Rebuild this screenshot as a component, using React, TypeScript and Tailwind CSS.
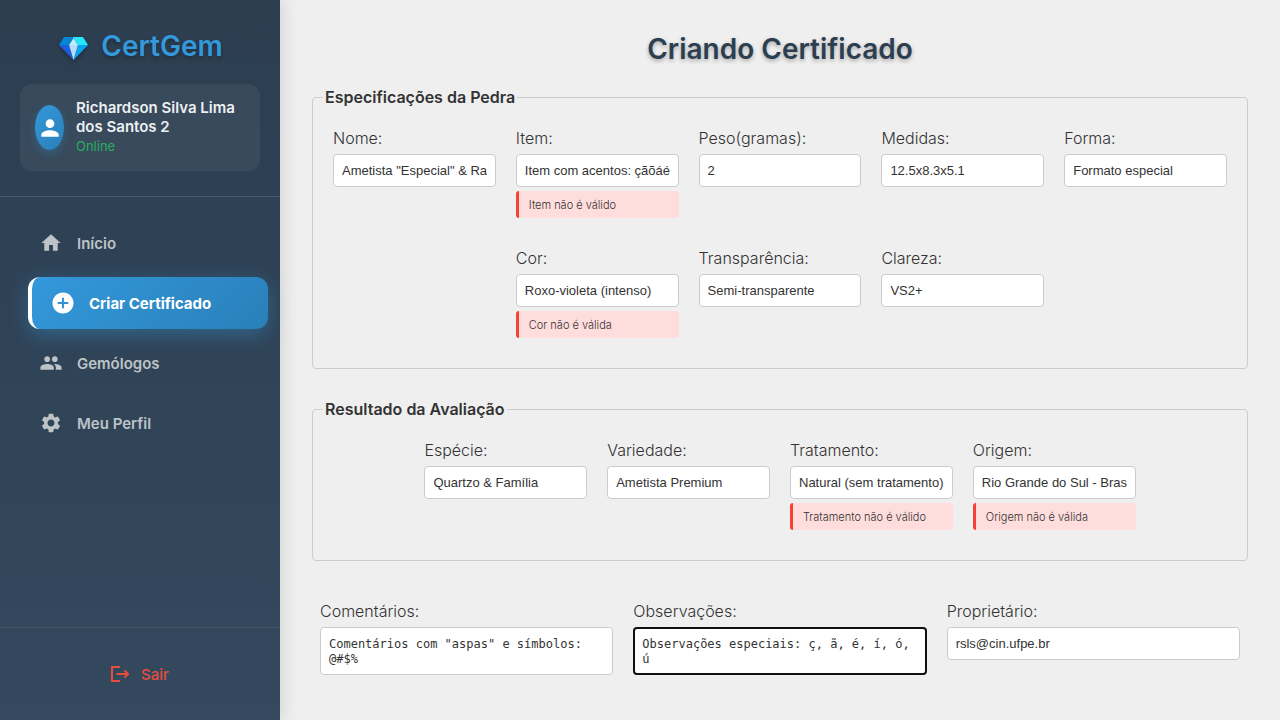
import { useEffect, useRef } from "react";
import { MdAddCircle, MdHome, MdPeople, MdPerson, MdSettings } from "react-icons/md";
import type { IconType } from "react-icons";

type FieldData = { id: string; label: string; value: string; error?: string };

const stoneFields: FieldData[] = [
  { id: "nome", label: "Nome:", value: 'Ametista "Especial" & Rara' },
  { id: "item", label: "Item:", value: "Item com acentos: çãõáéíóú", error: "Item não é válido" },
  { id: "peso", label: "Peso(gramas):", value: "2" },
  { id: "medidas", label: "Medidas:", value: "12.5x8.3x5.1" },
  { id: "forma", label: "Forma:", value: "Formato especial" },
  { id: "cor", label: "Cor:", value: "Roxo-violeta (intenso)", error: "Cor não é válida" },
  { id: "transparencia", label: "Transparência:", value: "Semi-transparente" },
  { id: "clareza", label: "Clareza:", value: "VS2+" },
];

const resultFields: FieldData[] = [
  { id: "especie", label: "Espécie:", value: "Quartzo & Família" },
  { id: "variedade", label: "Variedade:", value: "Ametista Premium" },
  { id: "tratamento", label: "Tratamento:", value: "Natural (sem tratamento)", error: "Tratamento não é válido" },
  { id: "origem", label: "Origem:", value: "Rio Grande do Sul - Brasil", error: "Origem não é válida" },
];

const inputClass =
  "h-[33px] w-full rounded border border-[#ccc] bg-white px-2 font-['Liberation_Sans',Arial,sans-serif] text-[13px] text-[#333] outline-none";
const areaClass =
  "block h-12 w-full resize-none overflow-hidden rounded bg-white font-['DejaVu_Sans_Mono',monospace] text-[12px] leading-[15px] text-[#333] outline-none";
const labelClass = "mb-[7px] block text-base leading-[18px] font-light text-[#333]";

function Field({ id, label, value, error }: FieldData) {
  return (
    <div className="min-h-[100px] w-[calc(20%-16px)]">
      <label htmlFor={id} className={labelClass}>
        {label}
      </label>
      <input id={id} type="text" defaultValue={value} className={inputClass} />
      {error && (
        <p className="mt-1 rounded-[3px] border-l-[3px] border-[#f44336] bg-[#ffdddd] px-2.5 pt-[7px] pb-[5px] text-[11px] leading-[15px] font-light text-[#333]">
          {error}
        </p>
      )}
    </div>
  );
}

function FieldGroup({ title, fields }: { title: string; fields: FieldData[] }) {
  return (
    <fieldset className="rounded border border-[#ccc] px-5 pt-[22px] pb-[19px]">
      <legend className="-ml-2.5 px-0.5 text-base leading-5 font-semibold text-[#333]">{title}</legend>
      <div className="flex flex-wrap justify-center gap-5">
        {fields.map((f) => (
          <Field key={f.id} {...f} />
        ))}
      </div>
    </fieldset>
  );
}

function Gem() {
  return (
    <svg viewBox="-2 -6 32 30" className="h-[30px] w-8 drop-shadow-[0_2px_2px_rgba(0,0,0,0.3)]" aria-hidden="true">
      <path d="M5 0H15L10 8H0Z" fill="#0486d6" />
      <path d="M14 0H24L29 8H19Z" fill="#26e6fb" />
      <path d="M14.5 1L19 8L14.5 11L10 8Z" fill="#b6f2fd" />
      <path d="M0 8H10L14.5 23Z" fill="#1d5fdb" />
      <path d="M19 8H29L14.5 23Z" fill="#05a5f0" />
      <path d="M10 8H19L14.5 23Z" fill="#b4dcff" />
    </svg>
  );
}

function LogoutIcon() {
  return (
    <svg viewBox="0 0 22 22" className="size-[22px]" fill="none" stroke="currentColor" strokeWidth="2" aria-hidden="true">
      <path d="M11 4H3V18H11" />
      <path d="M7.5 11H19" />
      <path d="M15.5 7.5L19 11L15.5 14.5" />
    </svg>
  );
}

function NavItem({ icon: Icon, label, active }: { icon: IconType; label: string; active?: boolean }) {
  return (
    <a
      href="#"
      className={
        active
          ? "ml-2 -mr-2 flex h-[52px] items-center gap-[15px] rounded-xl border-l-4 border-white bg-linear-135 from-[#3498db] to-[#2980b9] px-5 font-bold text-white shadow-[0_6px_20px_rgba(52,152,219,0.4)]"
          : "flex h-[52px] items-center gap-[15px] rounded-xl px-5 font-semibold text-[#bdc3c7]"
      }
    >
      <Icon className={active ? "size-[22px] scale-115" : "size-[22px] scale-105"} />
      <span className="pt-0.5">{label}</span>
    </a>
  );
}

export default function App() {
  const notes = useRef<HTMLTextAreaElement>(null);

  useEffect(() => {
    const el = notes.current;
    if (!el) return;
    el.focus();
    el.setSelectionRange(el.value.length, el.value.length);
  }, []);

  return (
    <div className="flex min-h-screen bg-[#efefef] font-[Inter,sans-serif] text-[#333]">
      <aside className="z-10 flex w-[280px] shrink-0 flex-col bg-linear-to-b from-[#2c3e50] to-[#34495e] shadow-[4px_0_15px_rgba(0,0,0,0.1)]">
        <div className="border-b border-[#465a6c] px-5 pt-6 pb-[25px]">
          <div className="mb-4 flex items-center justify-center gap-3">
            <Gem />
            <span className="text-[28px] leading-[44px] font-semibold text-[#3498db] [text-shadow:0_2px_4px_rgba(0,0,0,0.3)]">
              CertGem
            </span>
          </div>
          <div className="flex items-center gap-3 rounded-xl bg-white/5 px-[15px] py-3.5">
            <div className="flex h-[45px] w-[29px] shrink-0 items-center justify-center rounded-[50%] bg-linear-135 from-[#3498db] to-[#2980b9] shadow-[0_3px_10px_rgba(52,152,219,0.3)]">
              <MdPerson className="size-[26px] shrink-0 text-white" />
            </div>
            <div>
              <p className="text-[15px] leading-[19px] font-semibold text-[#ecf0f1]">Richardson Silva Lima dos Santos 2</p>
              <p className="text-[13px] leading-[21px] text-[#27ae60]">Online</p>
            </div>
          </div>
        </div>
        <nav className="flex grow flex-col gap-2 px-5 py-5 text-[15px]">
          <NavItem icon={MdHome} label="Início" />
          <NavItem icon={MdAddCircle} label="Criar Certificado" active />
          <NavItem icon={MdPeople} label="Gemólogos" />
          <NavItem icon={MdSettings} label="Meu Perfil" />
        </nav>
        <div className="border-t border-[#465a6c] p-5">
          <button
            type="button"
            className="flex h-[52px] w-full items-center justify-center gap-2.5 pr-0.5 text-[15px] font-medium text-[#e74c3c]"
          >
            <LogoutIcon />
            <span className="pt-0.5">Sair</span>
          </button>
        </div>
      </aside>

      <main className="min-w-0 grow px-8 pt-7">
        <h1 className="mb-[17px] text-center text-[28px] leading-[42px] font-semibold text-[#2c3e50] [text-shadow:0_2px_4px_rgba(0,0,0,0.3)]">
          Criando Certificado
        </h1>
        <form className="flex flex-col gap-[30px]">
          <FieldGroup title="Especificações da Pedra" fields={stoneFields} />
          <FieldGroup title="Resultado da Avaliação" fields={resultFields} />
          <div className="grid grid-cols-3 gap-5 px-2 pt-[11px]">
            <div>
              <label htmlFor="comentarios" className={labelClass}>
                Comentários:
              </label>
              <textarea
                id="comentarios"
                defaultValue={'Comentários com "aspas" e símbolos: @#$%'}
                className={`${areaClass} border border-[#ccc] px-2 py-[9px]`}
              />
            </div>
            <div>
              <label htmlFor="observacoes" className={labelClass}>
                Observações:
              </label>
              <textarea
                id="observacoes"
                ref={notes}
                defaultValue="Observações especiais: ç, ã, é, í, ó, ú"
                className={`${areaClass} border-2 border-[#101010] px-[7px] py-2`}
              />
            </div>
            <div>
              <label htmlFor="proprietario" className={labelClass}>
                Proprietário:
              </label>
              <input id="proprietario" type="text" defaultValue="rsls@cin.ufpe.br" className={inputClass} />
            </div>
          </div>
        </form>
      </main>
    </div>
  );
}
